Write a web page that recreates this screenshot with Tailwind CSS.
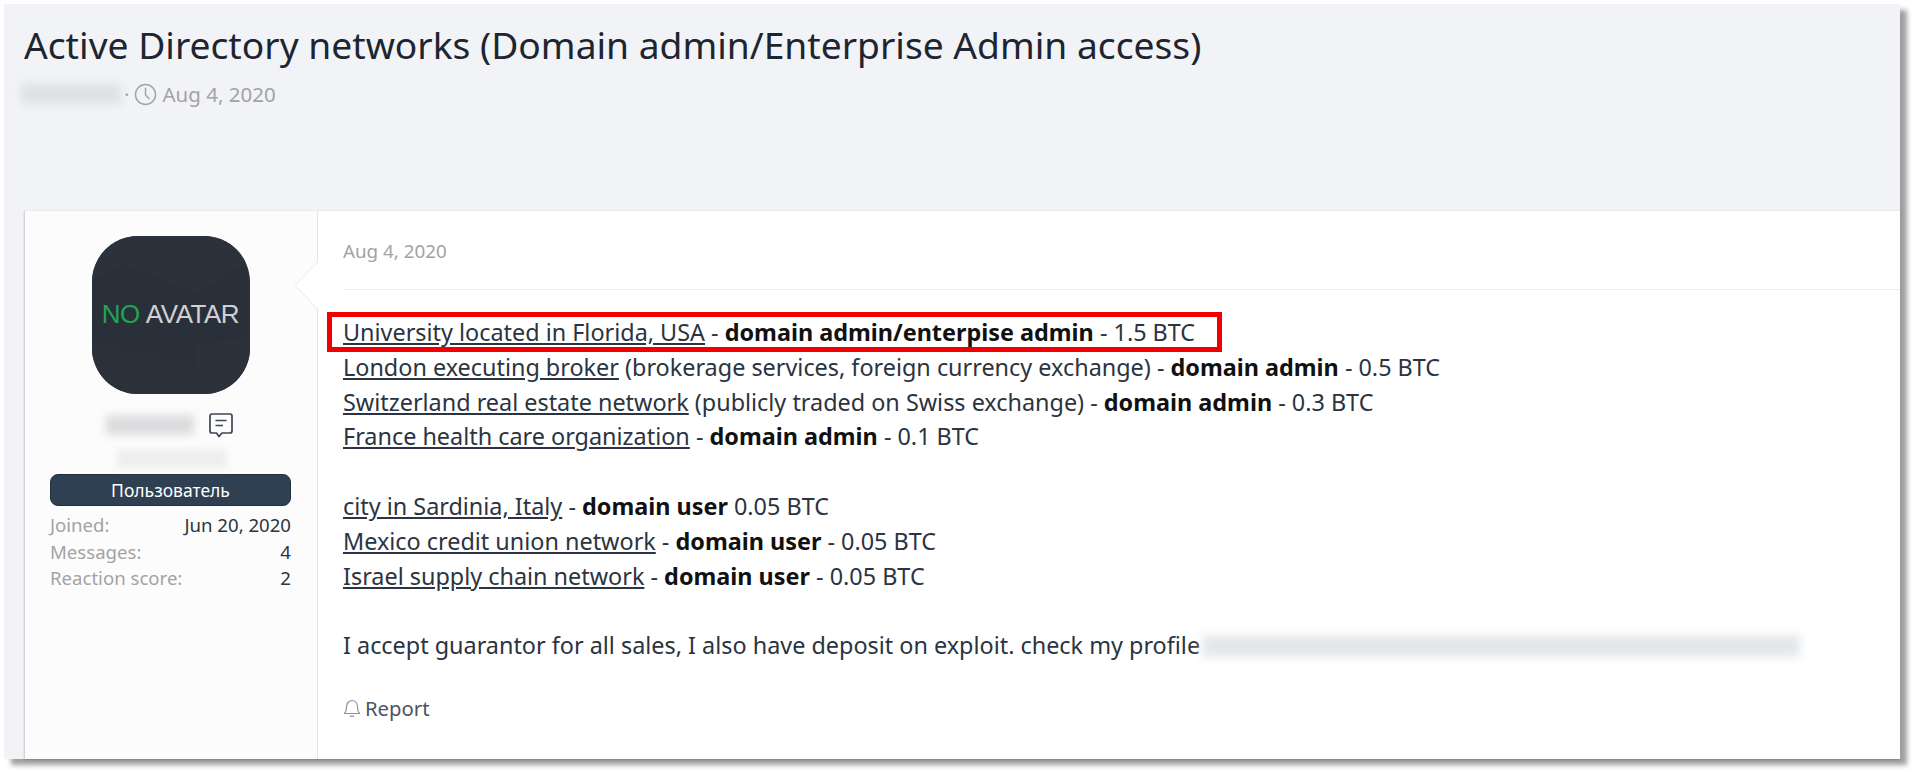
<!DOCTYPE html>
<html>
<head>
<meta charset="utf-8">
<script src="https://cdn.jsdelivr.net/npm/@tailwindcss/browser@4"></script>
</head>
<body class="bg-white overflow-hidden">
<div class="w-[1913px] h-[773px] pt-[4px] pl-[4px] font-['Noto_Sans',sans-serif]">
  <div class="w-[1896px] h-[755px] bg-[#f1f3f7] shadow-[7px_6px_5px_rgba(0,0,0,0.38)] flex flex-col pl-[21px]">
    <header class="h-[206px] shrink-0 flex flex-col">
      <h1 class="-ml-[1px] mt-[15px] text-[37.2px] leading-[52px] text-[#1d2530] whitespace-nowrap">Active Directory networks (Domain admin/Enterprise Admin access)</h1>
      <div class="mt-[10px] flex items-center text-[20.5px] leading-[26px] text-[#a3a3a3]">
        <span class="w-[100px] h-[20px] -ml-[4px] bg-[#dfe1e5] blur-[4px]"></span>
        <span class="ml-[3px]">·</span>
        <svg class="ml-[4px] w-[23px] h-[23px]" viewBox="0 0 22 22" fill="none" stroke="#a3a3a3" stroke-width="1.4"><circle cx="11" cy="11" r="9.6"/><path d="M11 4.5V11.5L15 15.5"/></svg>
        <span class="ml-[6px]">Aug 4, 2020</span>
      </div>
    </header>
    <article class="relative flex-1 flex bg-white border-t border-[#e9eaec] shadow-[-1px_1px_2px_rgba(0,0,0,0.18)] rounded-bl-[3px]">
      <aside class="relative w-[293px] shrink-0 bg-[#fcfcfc] border-r border-[#e4e5e7] flex flex-col items-center pt-[25px] pl-[25px] pr-[26px]">
        <div class="relative overflow-hidden w-[158px] h-[158px] rounded-[46px] bg-[#2a303a] flex items-center justify-center pb-[2px] font-['Liberation_Sans',sans-serif] text-[26px] tracking-[-0.5px] whitespace-nowrap">
          <svg class="absolute inset-0 w-full h-full" viewBox="0 0 158 158"><path d="M0 45L30 28L105 58L158 25V0H0Z" fill="#2c323b"/><path d="M105 158V110L158 100V158Z" fill="#2c323b"/><path d="M0 105L105 128V158H0Z" fill="#2b313a"/></svg>
          <span class="relative text-[#1fa552]">NO</span><span class="relative ml-[6px] text-[#cfd1d3]">AVATAR</span>
        </div>
        <div class="mt-[18px] h-[26px] w-full flex items-center justify-center">
          <span class="ml-[-1px] w-[88px] h-[20px] bg-[#dcdcde] blur-[4px]"></span>
          <svg class="ml-[14px] w-[26px] h-[27px]" viewBox="0 0 26 27" fill="none" stroke="#3c4654" stroke-width="1.7" stroke-linejoin="round"><path d="M4 2H22C23.2 2 24 2.8 24 4V19C24 20.2 23.2 21 22 21H14L11 24.5L8.5 21H4C2.8 21 2 20.2 2 19V4C2 2.8 2.8 2 4 2Z"/><path d="M7.5 8.5H18.5M7.5 13.5H15"/></svg>
        </div>
        <div class="mt-[11px] h-[19px] w-[110px] ml-[2px] bg-[#eeeeef] blur-[3px]"></div>
        <div class="mt-[6px] w-full h-[32px] rounded-[8px] bg-[#2f4052] border border-[#25303d] text-white text-[17.5px] leading-[30px] text-center">Пользователь</div>
        <dl class="mt-[6px] w-full text-[18.6px] leading-[26.5px] text-[#a3a3a3]">
          <div class="flex justify-between"><dt>Joined:</dt><dd class="text-[#2b3440]">Jun 20, 2020</dd></div>
          <div class="flex justify-between"><dt>Messages:</dt><dd class="text-[#2b3440]">4</dd></div>
          <div class="flex justify-between"><dt>Reaction score:</dt><dd class="text-[#2b3440]">2</dd></div>
        </dl>
        <svg class="absolute top-[51px] -right-[1px] w-[24px] h-[48px]" viewBox="0 0 24 48"><path d="M24 0L1 23.5L24 47Z" fill="#fff"/><path d="M23.5 0L1 23.5L23.5 47" fill="none" stroke="#e8e9eb"/></svg>
      </aside>
      <main class="flex-1 pl-[25px] flex flex-col relative">
        <div class="h-[79px] border-b border-[#eaebed] text-[18.8px] leading-[24px] text-[#a3a3a3] pt-[28px]">Aug 4, 2020</div>
        <div class="mt-[25px] text-[23.4px] leading-[34.8px] text-[#2b3440] whitespace-nowrap">
          <p class="relative"><a class="underline">University located in Florida, USA</a> - <b class="text-[#111]">domain admin/enterpise admin</b> - 1.5 BTC<span class="absolute left-[-16px] top-[-3px] w-[895px] h-[40px] border-[5px] border-[#f00000]"></span></p>
          <p><a class="underline">London executing broker</a> (brokerage services, foreign currency exchange) - <b class="text-[#111]">domain admin</b> - 0.5 BTC</p>
          <p><a class="underline">Switzerland real estate network</a> (publicly traded on Swiss exchange) - <b class="text-[#111]">domain admin</b> - 0.3 BTC</p>
          <p><a class="underline">France health care organization</a> - <b class="text-[#111]">domain admin</b> - 0.1 BTC</p>
          <p class="mt-[34.8px]"><a class="underline">city in Sardinia, Italy</a> - <b class="text-[#111]">domain user</b> 0.05 BTC</p>
          <p><a class="underline">Mexico credit union network</a> - <b class="text-[#111]">domain user</b> - 0.05 BTC</p>
          <p><a class="underline">Israel supply chain network</a> - <b class="text-[#111]">domain user</b> - 0.05 BTC</p>
          <p class="mt-[34.8px] flex items-center">I accept guarantor for all sales, I also have deposit on exploit. check my profile<span class="ml-[2px] w-[598px] h-[22px] bg-[#e4e7ea] blur-[5px]"></span></p>
        </div>
        <div class="mt-[32px] flex items-center text-[20.3px] leading-[26px] text-[#4a5564]">
          <svg class="w-[18px] h-[20px]" viewBox="0 0 18 20" fill="none" stroke="#8a93a0" stroke-width="1.2" stroke-linejoin="round"><path d="M1.5 15.5C3 14 3.5 12.5 3.5 9C3.5 5 6 2.5 9 2.5C12 2.5 14.5 5 14.5 9C14.5 12.5 15 14 16.5 15.5Z"/><path d="M7 17.5C7.5 18.7 10.5 18.7 11 17.5"/></svg>
          <span class="ml-[4px]">Report</span>
        </div>
      </main>
    </article>
  </div>
</div>
</body>
</html>
